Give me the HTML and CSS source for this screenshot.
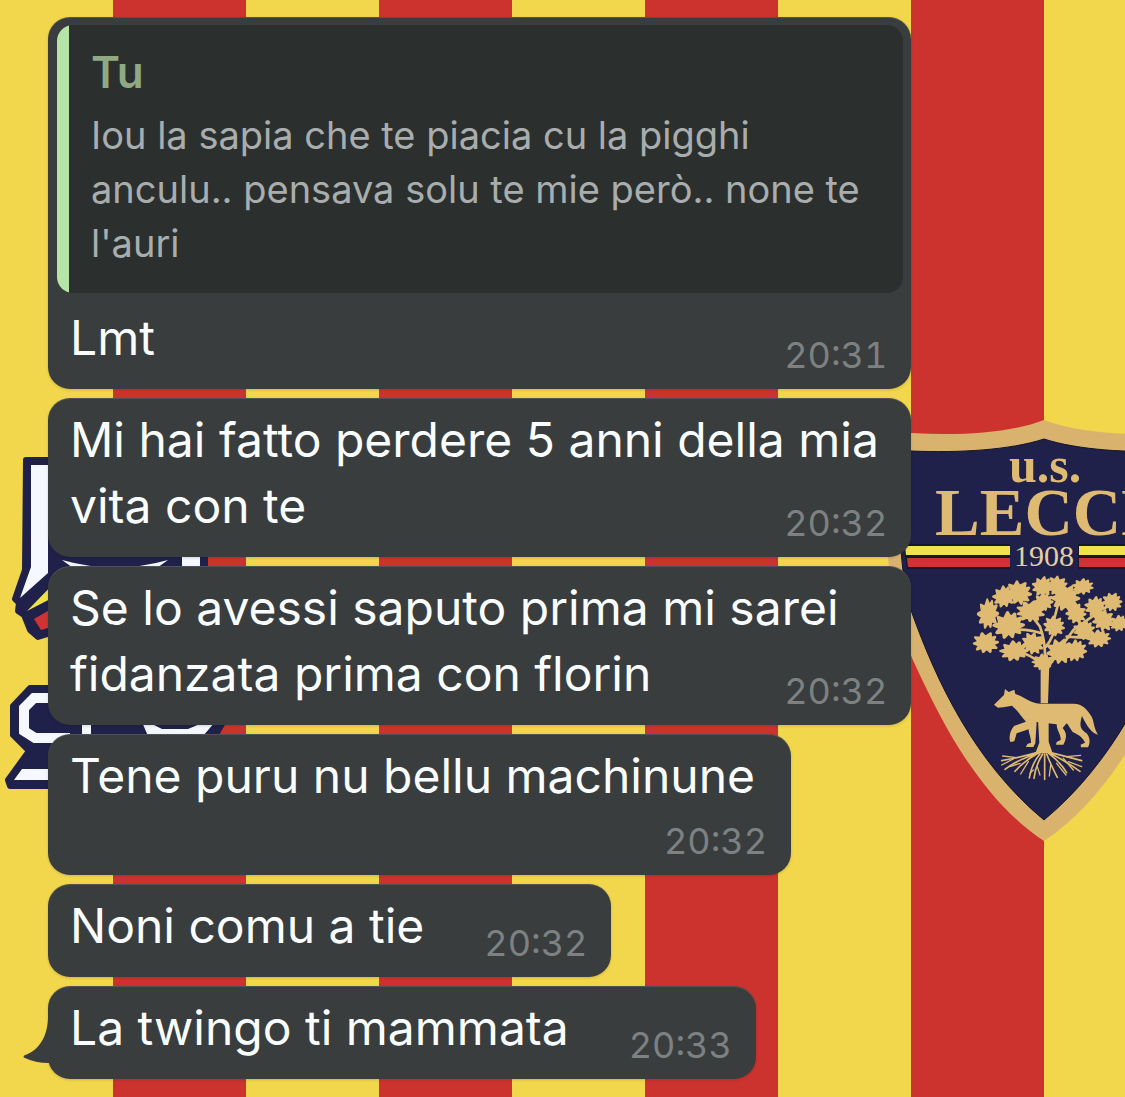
FILE: index.html
```html
<!DOCTYPE html>
<html lang="it">
<head>
    <meta charset="UTF-8">
    <meta name="viewport" content="width=device-width, initial-scale=1.0">
    <title>Chat</title>
    <link rel="stylesheet" href="styles.css">
</head>
<body>
    <div class="wallpaper" aria-hidden="true">
        <svg class="emblem" viewBox="0 440 240 360" width="240" height="360">
            <g fill="#20214a" stroke="#20214a" stroke-width="6" stroke-linejoin="round">
                <path d="M26 460H205V620H60L48 634L38 637L30 630L24 615L18 611L19 603L15 599L25 570Z"/>
                <path d="M30 688H222V724L210 745V786H10L8 780L29 751L13 735V706Z"/>
            </g>
            <g fill="#f6f8ff">
                <path d="M31 465H48V573L20 598L31 567Z"/>
                <path d="M62 560Q115 575 168 560L154 570H76Z"/>
                <path d="M182 500H200V570H182Z"/>
                <path d="M82 720H91V736H82ZM142 722H215L203 736H148Z"/>
                <path d="M22 769H60V780H14Z"/>
            </g>
            <path d="M70 698H34L24 708V731L35 738H70" fill="none" stroke="#f6f8ff" stroke-width="10"/>
            <path d="M152 724H200L188 729H162Z" fill="#20214a"/>
            <path d="M27 611L60 577V594Z" fill="#eee24b"/>
            <path d="M34 619L58 605V625L41 630Z" fill="#cf3333"/>
        </svg>

        <svg class="crest" viewBox="-165 415 330 430" width="330" height="430">
            <defs>
                <path id="leaf" stroke="#dfba72" stroke-width="9" stroke-linejoin="round" d="M-3 -38L6 -22L16 -34L18 -17L34 -22L24 -6L40 -1L24 8L30 22L14 17L10 34L0 22L-12 36L-14 20L-32 22L-22 8L-40 0L-24 -7L-28 -24L-12 -18Z"/>
            </defs>
            <path fill="#d9b36d" d="M0 420C-34 433 -84 436 -133 433L-160 430C-164 510 -158 590 -132 658C-110 705 -70 795 0 841C70 795 110 705 132 658C158 590 164 510 160 430L133 433C84 436 34 433 0 420Z"/>
            <path fill="#20214a" stroke="#15142b" stroke-width="1" d="M0 439C-34 450 -84 453 -133 451H-145C-145 520 -145 575 -132 613C-108 680 -70 762 0 820C70 762 108 680 132 613C145 575 145 520 145 451H133C84 453 34 450 0 439Z"/>
            <path fill="#17162f" d="M-140 544H-34V569H-137ZM34 544H140L137 569H34Z"/>
            <path fill="#efe24a" d="M-139 546H-34V555H-138ZM35 546H139L138 555H35Z"/>
            <path fill="#cf3333" d="M-137 558H-34V567H-136ZM35 558H137L136 567H35Z"/>
            <g class="crest-text">
                <text x="-35" y="482" font-size="50">u.s.</text>
                <text x="-109" y="535" font-size="67">LECCE</text>
                <text x="-30" y="566" font-size="30" class="year">1908</text>
            </g>

            <!-- quercia e lupa -->
            <g transform="translate(-144 570) scale(.3333)" fill="#dfba72">
                <use href="#leaf" transform="translate(312 80) scale(.8)"/>
                <use href="#leaf" transform="translate(356 68) scale(.9) rotate(40)"/>
                <use href="#leaf" transform="translate(264 132) scale(.75 1.1)"/>
                <use href="#leaf" transform="translate(326 166) scale(1.1 1)"/>
                <use href="#leaf" transform="translate(257 218) scale(.9 .8) rotate(30)"/>
                <use href="#leaf" transform="translate(342 243) scale(1 .75)"/>
                <use href="#leaf" transform="translate(398 220) scale(.8) rotate(60)"/>
                <use href="#leaf" transform="translate(428 50) scale(.75) rotate(15)"/>
                <use href="#leaf" transform="translate(472 48) scale(.75) rotate(50)"/>
                <use href="#leaf" transform="translate(392 124) scale(1 .8) rotate(20)"/>
                <use href="#leaf" transform="translate(430 96) scale(.7)"/>
                <use href="#leaf" transform="translate(496 84) scale(1) rotate(35)"/>
                <use href="#leaf" transform="translate(548 50) scale(.75 .6) rotate(10)"/>
                <use href="#leaf" transform="translate(462 168) scale(.75) rotate(45)"/>
                <use href="#leaf" transform="translate(528 130) scale(.75) rotate(70)"/>
                <use href="#leaf" transform="translate(586 110) scale(.75) rotate(10)"/>
                <use href="#leaf" transform="translate(636 96) scale(.7) rotate(30)"/>
                <use href="#leaf" transform="translate(658 160) scale(.7 .6)"/>
                <use href="#leaf" transform="translate(610 150) scale(.8) rotate(60)"/>
                <use href="#leaf" transform="translate(596 206) scale(.85 .65)"/>
                <use href="#leaf" transform="translate(552 180) scale(.75) rotate(20)"/>
                <use href="#leaf" transform="translate(480 244) scale(.95) rotate(25)"/>
                <use href="#leaf" transform="translate(526 242) scale(.8) rotate(5)"/>
                <use href="#leaf" transform="translate(428 276) scale(.75 .6)"/>
                <path d="M422 285H448L444 400H422ZM414 450H446V515L458 550H406L418 518Z"/>
                <path d="M282 404L312 375L315 357L326 366L343 359L346 372C370 378 388 398 420 401H520C545 400 562 418 575 440C583 456 580 472 594 494C572 488 560 466 546 438C540 462 536 474 560 490C572 505 570 522 564 532H543L542 524L555 518C550 504 536 494 518 486C508 472 506 466 500 460L488 474C502 490 500 505 490 524H468L470 516L482 510C484 495 470 482 470 463L410 456L406 520L400 531H378L382 522L393 518C394 500 385 490 386 478L350 490L343 514L331 516C325 500 332 480 342 468L378 455C364 440 352 420 336 407L310 412L294 413Z"/>
                <g fill="none" stroke="#dfba72" stroke-linecap="round">
                    <path stroke-width="8" d="M434 300Q440 220 420 170L390 130M435 290Q400 260 370 250M440 300Q470 250 520 180L590 130M425 190Q380 175 340 180M430 210L400 210M438 230Q470 190 462 150L480 80M500 200L590 205"/>
                    <path stroke-width="5" d="M410 548Q370 560 305 572M414 550Q370 575 345 604M420 552Q395 580 388 624M428 552Q405 590 402 625M434 552V628M440 552Q455 590 472 622M446 550Q480 575 500 608M452 548Q500 560 545 572M450 550Q500 575 540 604M416 550Q350 570 315 598"/>
                    <path stroke-width="4" d="M350 563L308 558M340 567L305 585M360 580L330 590M385 575L362 612M412 590L420 615M452 585L448 618M470 580L498 615M490 565L520 600M500 560L542 556M505 575L545 590M400 600L390 610"/>
                </g>
            </g>
        </svg>
    </div>

    <main class="chat">
        <article class="bubble">
            <blockquote class="quote">
                <strong class="quote-author">Tu</strong>
                <p>Iou la sapia che te piacia cu la pigghi anculu.. pensava solu te mie però.. none te l'auri</p>
            </blockquote>
            <p class="text">Lmt <time>20:31</time></p>
        </article>

        <article class="bubble">
            <p class="text">Mi hai fatto perdere 5 anni della mia vita con te <time>20:32</time></p>
        </article>

        <article class="bubble">
            <p class="text">Se lo avessi saputo prima mi sarei fidanzata prima con florin <time>20:32</time></p>
        </article>

        <article class="bubble stacked">
            <p class="text"><span>Tene puru nu bellu machinune</span> <time>20:32</time></p>
        </article>

        <article class="bubble">
            <p class="text">Noni comu a tie <time>20:32</time></p>
        </article>

        <article class="bubble">
            <p class="text">La twingo ti mammata <time>20:33</time></p>
            <svg class="tail" viewBox="0 0 32 50" width="32" height="50" aria-hidden="true">
                <path fill="#393d3e" d="M25 0C25 20 15 34 2 38Q-1 40 2 41Q12 46 26 46L32 50V0Z"/>
            </svg>
        </article>
    </main>
</body>
</html>
```

FILE: styles.css
```css
* {
    box-sizing: border-box;
}

body {
    margin: 0;
    min-height: 100vh;
    position: relative;
    overflow-x: hidden;
    font-family: Inter, "Liberation Sans", sans-serif;
    color: #fafdff;
}

/* Sfondo giallorosso */
.wallpaper {
    position: absolute;
    inset: 0;
    overflow: hidden;
    background: repeating-linear-gradient(90deg, #f2d64b 0 133px, #cc332f 133px 266px) -20px 0 / calc(100% + 20px) 100%;
}

.emblem {
    position: absolute;
    left: 0;
    top: 440px;
}

.crest {
    position: absolute;
    left: 879px;
    top: 415px;
}

.crest-text {
    font-family: "Liberation Serif", serif;
    font-weight: bold;
    fill: #dfba72;
}

.crest-text .year {
    font-weight: normal;
    fill: #e3cfa0;
}

.chat {
    position: relative;
    width: 81%;
    padding: 17px 0 18px 48px;
    display: flex;
    flex-direction: column;
    align-items: flex-start;
    gap: 9px;
}

.bubble {
    position: relative;
    max-width: 100%;
    background: #393d3e;
    border-radius: 22px;
    box-shadow: inset 0 1px 0 rgba(255, 255, 255, 0.12), 0 1px 3px rgba(0, 0, 0, 0.15);
}

.text {
    display: flow-root;
    margin: 0;
    padding: 9px 24px 10px 22px;
    font-size: 48px;
    line-height: 66px;
}

time {
    float: right;
    margin: 26px 0 0 60px;
    font-size: 36px;
    line-height: 48px;
    font-variant-numeric: tabular-nums;
    color: #7d8182;
}

/* L'ora va sotto quando il testo riempie la riga */
.stacked .text {
    display: flex;
    flex-direction: column;
}

.stacked span {
    padding-right: 12px;
}

.stacked time {
    align-self: flex-end;
    margin: 8px 0 0;
}

.quote {
    margin: 8px 8px 3px 9px;
    padding: 20px 22px 23px 34px;
    background: linear-gradient(90deg, #b6e3a7 12px, #2b302f 12px);
    border-radius: 16px;
    font-size: 38px;
    line-height: 54px;
    color: #a9adad;
}

.quote p {
    margin: 0;
}

.quote-author {
    display: block;
    margin-bottom: 9px;
    font-size: 44px;
    font-weight: 600;
    color: #8faa83;
}

.tail {
    position: absolute;
    left: -25px;
    bottom: 12px;
}
```
